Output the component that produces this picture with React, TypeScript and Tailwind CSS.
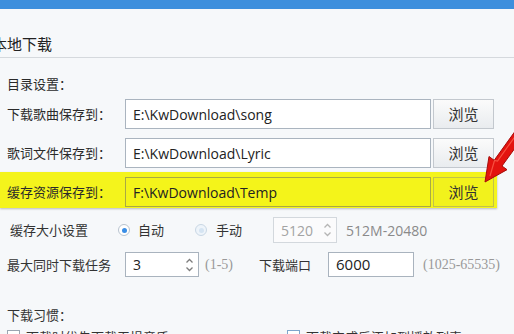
import React from 'react';

const cjk = "font-['Noto_Sans_CJK_SC',sans-serif]";
const latin = "font-['Open_Sans','Noto_Sans_CJK_SC',sans-serif]";

const Spin: React.FC<{ value: string; width: string; disabled?: boolean; height: string }> = ({ value, width, disabled, height }) => (
  <div
    className={`${width} ${height} flex items-center justify-between border ${
      disabled ? 'border-[#d3d8dd] bg-[#fbfbfc] text-[#a3a3a3]' : 'border-[#a9b3be] bg-white text-[#222]'
    } pl-[7px] pr-[4px] ${latin} text-[14px]`}
  >
    <span>{value}</span>
    <svg width="9" height="16" viewBox="0 0 9 16" className={disabled ? 'text-[#b5b5b5]' : 'text-[#7d7d7d]'}>
      <path d="M1.5 5.5 L4.5 2.5 L7.5 5.5" fill="none" stroke="currentColor" strokeWidth="1.3" />
      <path d="M1.5 10.5 L4.5 13.5 L7.5 10.5" fill="none" stroke="currentColor" strokeWidth="1.3" />
    </svg>
  </div>
);

const Radio: React.FC<{ checked?: boolean }> = ({ checked }) => (
  <span
    className={`w-[12px] h-[12px] rounded-full border flex items-center justify-center ${
      checked ? 'border-[#b9c4cf] bg-white' : 'border-[#c9d7e4] bg-[#eef4fa]'
    }`}
  >
    <span className={`w-[5px] h-[5px] rounded-full ${checked ? 'bg-[#3a8ee6]' : 'bg-[#d5e4f2]'}`} />
  </span>
);

const PathRow: React.FC<{ label: string; path: string; hl?: boolean }> = ({ label, path, hl }) => (
  <div className="flex items-center h-[30px]">
    <div className={`w-[118px] ${cjk} text-[13px] text-[#2a2a2a]`}>{label}</div>
    <div
      className={`w-[306px] h-full flex items-center pl-[7px] border ${
        hl ? 'border-[#a9a944] bg-[#f4f41a]' : 'border-[#aab4bf] bg-white'
      } ${latin} text-[14px] text-[#222]`}
    >
      {path}
    </div>
    <button
      className={`ml-[2px] w-[61px] h-full border ${
        hl ? 'border-[#c2c24a] bg-[#f2f21c]' : 'border-[#c3c8ce] bg-gradient-to-b from-[#fbfbfb] to-[#e9ecef]'
      } ${cjk} text-[15px] text-[#333]`}
    >
      浏览
    </button>
  </div>
);

export default function App() {
  return (
    <div className="relative w-[514px] h-[334px] overflow-hidden bg-[#f6f8fa]">
      <div className="h-[9px] bg-[#3d8fdd]" />
      <div className="h-[49px] flex items-end pb-[3px] border-b border-[#d5d9dd]">
        <span className={`-ml-[8px] ${cjk} text-[15px] leading-[20px] text-[#222]`}>本地下载</span>
      </div>

      <div className="px-[7px]">
        <div className={`mt-[17px] ${cjk} text-[13px] leading-[18px] text-[#2a2a2a]`}>目录设置：</div>

        <div className="mt-[6px]">
          <PathRow label="下载歌曲保存到：" path="E:\KwDownload\song" />
        </div>
        <div className="mt-[9px]">
          <PathRow label="歌词文件保存到：" path="E:\KwDownload\Lyric" />
        </div>
        <div className="mt-[4px] -ml-[7px] pl-[7px] w-[497px] pt-[5px] pb-[1px] bg-[#f4f41c] shadow-[0_1px_2px_rgba(0,0,0,0.25)]">
          <PathRow label="缓存资源保存到：" path="F:\KwDownload\Temp" hl />
        </div>

        <div className={`mt-[9px] h-[26px] flex items-center ${cjk} text-[13px] text-[#333]`}>
          <span className="w-[111px] pl-[3px]">缓存大小设置</span>
          <Radio checked />
          <span className="ml-[8px]">自动</span>
          <span className="ml-[31px]">
            <Radio />
          </span>
          <span className="ml-[9px]">手动</span>
          <div className="ml-[31px] h-full">
            <Spin value="5120" width="w-[64px]" height="h-full" disabled />
          </div>
          <span className={`ml-[9px] ${latin} text-[14px] text-[#8a8a8a]`}>512M-20480</span>
        </div>

        <div className={`mt-[9px] h-[25px] flex items-center ${cjk} text-[13px] text-[#333]`}>
          <span className="w-[118px]">最大同时下载任务</span>
          <Spin value="3" width="w-[74px]" height="h-full" />
          <span className="w-[60px] pl-[6px] font-['Liberation_Serif',serif] text-[14px] text-[#999]">(1-5)</span>
          <span className="w-[69px]">下载端口</span>
          <div className={`w-[86px] h-full flex items-center pl-[7px] border border-[#a9b3be] bg-white ${latin} text-[15px] text-[#222]`}>
            6000
          </div>
          <span className="ml-[9px] font-['Liberation_Serif',serif] text-[14px] text-[#999]">(1025-65535)</span>
        </div>

        <div className={`mt-[29px] ${cjk} text-[13px] leading-[18px] text-[#333]`}>下载习惯：</div>

        <div className={`mt-[5px] flex items-start ${cjk} text-[13px] leading-[16px] text-[#333]`}>
          <div className="w-[280px] flex items-start gap-[6px]">
            <span className="mt-[1px] w-[13px] h-[13px] border border-[#9ba6b2] bg-white" />
            <span>下载时优先下载无损音质</span>
          </div>
          <div className="flex items-start gap-[6px]">
            <span className="mt-[1px] w-[13px] h-[13px] border border-[#7fa6cc] bg-white" />
            <span>下载完成后添加到播放列表</span>
          </div>
        </div>
      </div>

      <svg className="absolute inset-0 pointer-events-none" width="514" height="334" viewBox="0 0 514 334">
        <polygon
          points="485,182 489,156.5 494.2,160.3 517.4,128 525.4,133.8 502,166 507,169.7"
          fill="#e3130f"
          stroke="#a50c0a"
          strokeWidth="1"
          strokeLinejoin="round"
        />
        <polyline points="490,176 494.5,160.5 497.5,161 519,131" fill="none" stroke="#ff6a55" strokeWidth="1.2" opacity="0.7" />
      </svg>
    </div>
  );
}
